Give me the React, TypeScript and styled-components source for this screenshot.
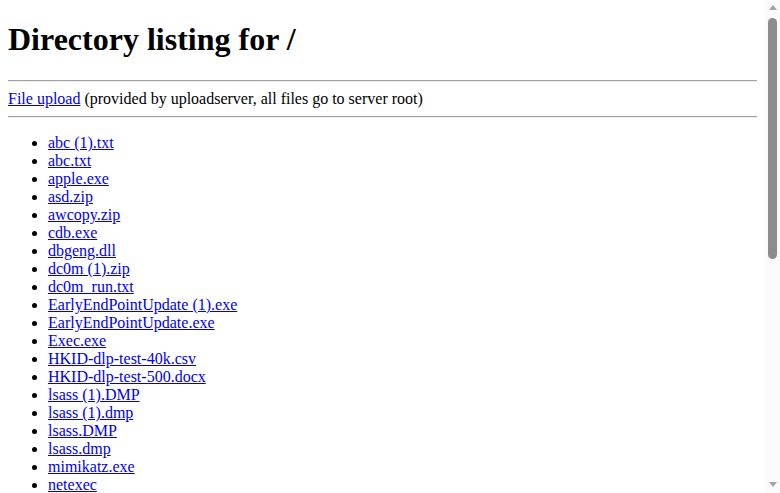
import React from "react";
import styled, { createGlobalStyle } from "styled-components";

const GlobalStyle = createGlobalStyle`
  html {
    background: #ffffff;
  }

  body {
    margin: 0 23px 8px 8px;
    font-family: "Liberation Serif", "Times New Roman", serif;
    font-size: 16px;
    line-height: normal;
    color: #000000;
  }
`;

const Title = styled.h1`
  margin: 0.67em 0;
  font-size: 2em;
  font-weight: bold;
`;

const Rule = styled.hr`
  margin: 8px 0;
  height: 0;
  border: none;
  border-top: 1px solid #a0a0a0;
  border-bottom: 1px solid #eeeeee;
`;

const UploadLine = styled.div`
  line-height: normal;
`;

const FileLink = styled.a`
  color: #0000ee;
  text-decoration: underline;
`;

const Listing = styled.ul`
  margin: 16px 0;
  padding-left: 40px;
  list-style: disc;
`;

const Entry = styled.li`
  line-height: normal;
`;

// the window's own scrollbar, drawn over the right edge
const ScrollBar = styled.div`
  position: fixed;
  top: 0;
  right: 0;
  width: 15px;
  height: 100vh;
  background: #fafafa;

  display: flex;
  flex-direction: column;
  align-items: center;
`;

const Arrow = styled.div<{ $down?: boolean }>`
  width: 0;
  height: 0;
  margin: ${(p) => (p.$down ? "5px 0 6px" : "5px 0 4px")};
  border-left: 4px solid transparent;
  border-right: 4px solid transparent;
  ${(p) =>
    p.$down
      ? "border-top: 5px solid #a3a3a3;"
      : "border-bottom: 5px solid #a3a3a3;"}
`;

const Track = styled.div`
  flex: 1;
  width: 100%;
  display: flex;
  justify-content: center;
  padding-top: 4px;
  box-sizing: border-box;
`;

const Thumb = styled.div`
  width: 9px;
  height: 241px;
  border-radius: 5px;
  background: #8c8c8c;
`;

// files served from the root, in the order the server sorts them
const files = [
  "abc (1).txt",
  "abc.txt",
  "apple.exe",
  "asd.zip",
  "awcopy.zip",
  "cdb.exe",
  "dbgeng.dll",
  "dc0m (1).zip",
  "dc0m_run.txt",
  "EarlyEndPointUpdate (1).exe",
  "EarlyEndPointUpdate.exe",
  "Exec.exe",
  "HKID-dlp-test-40k.csv",
  "HKID-dlp-test-500.docx",
  "lsass (1).DMP",
  "lsass (1).dmp",
  "lsass.DMP",
  "lsass.dmp",
  "mimikatz.exe",
  "netexec",
  "nmap.zip",
  "notepad.exe",
  "ntdsutil.txt",
  "payload.bin",
  "procdump.exe",
  "procdump64.exe",
  "PsExec.exe",
  "PsExec64.exe",
  "rclone.exe",
  "rubeus.exe",
  "SafetyKatz.exe",
  "sam.save",
  "SharpHound.zip",
  "system.save",
  "test.bat",
  "test.ps1",
  "test.txt",
  "upload.html",
  "whoami.txt",
  "winPEAS.exe",
  "winPEASx64.exe",
  "WinSCP.exe",
  "zip.py",
];

export default function App() {
  return (
    <>
      <GlobalStyle />
      <Title>Directory listing for /</Title>
      <Rule />
      <UploadLine>
        <FileLink href="upload">File upload</FileLink> (provided by
        uploadserver, all files go to server root)
      </UploadLine>
      <Rule />
      <Listing>
        {files.map((name) => (
          <Entry key={name}>
            <FileLink href={encodeURIComponent(name)}>{name}</FileLink>
          </Entry>
        ))}
      </Listing>
      <Rule />
      <ScrollBar>
        <Arrow />
        <Track>
          <Thumb />
        </Track>
        <Arrow $down />
      </ScrollBar>
    </>
  );
}
